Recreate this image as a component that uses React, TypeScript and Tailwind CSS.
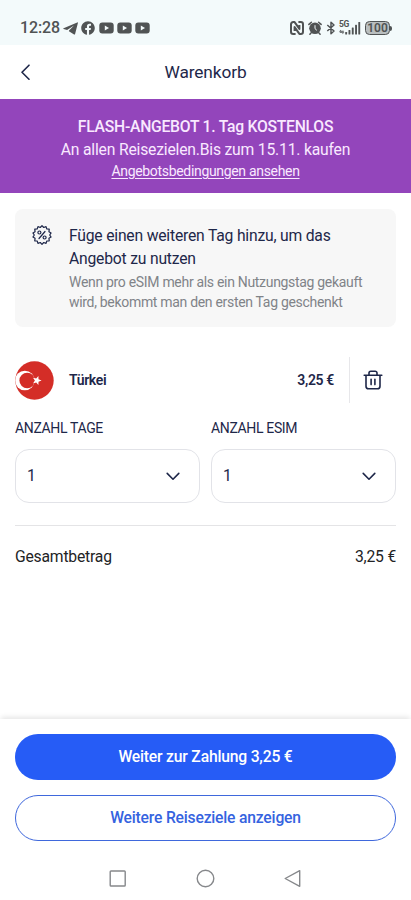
import { useState } from 'react';
import { FaFacebook } from 'react-icons/fa';

// Zigzag outline of the discount seal
const sealPoints = Array.from({ length: 28 }, (_, i) => {
  const r = i % 2 === 0 ? 9.3 : 7.7;
  const a = (i * Math.PI) / 14;
  return `${(10 + r * Math.sin(a)).toFixed(2)},${(10 - r * Math.cos(a)).toFixed(2)}`;
}).join(' ');

function TelegramIcon() {
  return (
    <svg className="w-[15px] h-[13px]" viewBox="0 0 15 13" fill="currentColor">
      <path d="M14.2 0.4 0.6 6.2c-.5.2-.5.7 0 .8l3.5 1L11 3.4 6 8.6l-.1.6 5.2 3.2c.5.3.9.1 1-.4L14.9.9c.1-.5-.2-.7-.7-.5Z" />
    </svg>
  );
}

function YoutubeIcon() {
  return (
    <svg className="w-[15px] h-[12px]" viewBox="0 0 15 12">
      <rect x="0.3" y="0.5" width="14.4" height="11" rx="3" fill="currentColor" />
      <path d="M5.8 3.6v4.8L10 6Z" fill="#f3fafb" />
    </svg>
  );
}

function StatusBar() {
  return (
    <div className="h-[45px] shrink-0 bg-[#f3fafb] text-[#505354] flex justify-between pt-[18px] pl-[20px] pr-[19px]">
      <div className="flex items-center h-5">
        <span className="w-[43px] text-[16px] leading-5 tracking-[-0.1px] font-medium">12:28</span>
        <TelegramIcon />
        <FaFacebook className="w-[14px] h-[14px] ml-[3px] mr-1" />
        <div className="flex gap-[3px]">
          <YoutubeIcon />
          <YoutubeIcon />
          <YoutubeIcon />
        </div>
      </div>
      <div className="flex items-center h-5">
        {/* NFC */}
        <svg className="w-[14px] h-[14px]" viewBox="0 0 14 14" fill="none" stroke="currentColor" strokeWidth="2" strokeLinejoin="round">
          <path d="M5.6 12.9H3.2A2.2 2.2 0 0 1 1 10.7V3.3a2.2 2.2 0 0 1 2.2-2.2h1.4l4.8 6.8V4" />
          <path d="M8.4 1.1h2.4A2.2 2.2 0 0 1 13 3.3v7.4a2.2 2.2 0 0 1-2.2 2.2H9.4L4.6 6.1V10" />
        </svg>
        {/* Alarm */}
        <svg className="w-[14px] h-[14px] ml-[4px]" viewBox="0 0 14 14" fill="none" stroke="currentColor" strokeLinecap="round">
          <circle cx="7" cy="7.3" r="5.8" fill="currentColor" stroke="none" />
          <path d="M.9 3.4 3.4 1.2M13.1 3.4l-2.5-2.2M3 12l-1.1 1.2M11 12l1.1 1.2" strokeWidth="1.5" />
          <path d="M7 4.6v3l1.6 1.5" stroke="#f3fafb" strokeWidth="1" />
        </svg>
        {/* Bluetooth */}
        <svg className="w-[10px] h-[14px] ml-[4px]" viewBox="0 0 10 14" fill="none" stroke="currentColor" strokeWidth="1.5" strokeLinejoin="round">
          <path d="M1.3 4 8 10 5 12.7V1.3L8 4 1.3 10" />
        </svg>
        {/* Signal */}
        <div className="relative ml-[3px] w-[22px] h-[14px]">
          <span className="absolute left-0 -top-px text-[8.5px] leading-[8px] font-bold tracking-[-0.5px]">5G</span>
          <svg className="w-[22px] h-[14px]" viewBox="0 0 22 14" fill="currentColor">
            <path d="M.3 10.3 2 8.7v1.1h2.8v1H.3ZM5.2 11.5l-1.7 1.7v-1.1H.8v-.8h4.4Z" />
            <rect x="6.2" y="11" width="1.9" height="2.6" rx=".5" />
            <rect x="9.5" y="9" width="1.9" height="4.6" rx=".5" />
            <rect x="12.8" y="6.5" width="1.9" height="7.1" rx=".5" />
            <rect x="16.1" y="3.8" width="1.9" height="9.8" rx=".5" />
            <rect x="19.3" y="1" width="1.9" height="12.6" rx=".5" />
          </svg>
        </div>
        <div className="ml-[4px] w-[25px] h-[14px] rounded-[4.5px] border border-[#505354] bg-[#b9bebf] flex items-center justify-center">
          <span className="text-[12px] leading-3 font-semibold">100</span>
        </div>
        <div className="w-[2px] h-[5px] rounded-r bg-[#505354]"></div>
      </div>
    </div>
  );
}

function Header() {
  return (
    <header className="h-[54px] shrink-0 flex items-center px-[20px] text-[#1e2749]">
      <button className="w-6">
        <svg className="w-[11px] h-[16px]" viewBox="0 0 11 16" fill="none" stroke="currentColor" strokeWidth="1.6" strokeLinecap="round" strokeLinejoin="round">
          <path d="M9 1.2 2 8.2l7 7" />
        </svg>
      </button>
      <h1 className="flex-1 mr-6 pt-px text-center text-[17.3px] tracking-[-0.1px]">Warenkorb</h1>
    </header>
  );
}

function FlashBanner() {
  return (
    <div className="h-[94px] shrink-0 bg-[#9345bb] text-[#f9e9ff] text-center pt-[16px]">
      <p className="text-[15.7px] leading-[23px] font-medium tracking-[-0.24px]">FLASH-ANGEBOT 1. Tag KOSTENLOS</p>
      <p className="text-[15.7px] leading-[23px] tracking-[-0.19px]">An allen Reisezielen.Bis zum 15.11. kaufen</p>
      <a className="block text-[14px] leading-[21px] tracking-[-0.32px] underline underline-offset-2">Angebotsbedingungen ansehen</a>
    </div>
  );
}

function Hint() {
  return (
    <div className="h-[118px] rounded-[8px] bg-[#f7f7f7] flex pl-[17px] pt-[15px]">
      <svg className="w-5 h-5 mt-[1px] shrink-0 text-[#1e2749]" viewBox="0 0 20 20" fill="none" stroke="currentColor" strokeWidth="1.2" strokeLinejoin="round" strokeLinecap="round">
        <polygon points={sealPoints} />
        <path d="M13 6.5 7 13.5" />
        <circle cx="7.4" cy="7.5" r="1.5" />
        <circle cx="12.6" cy="12.5" r="1.5" />
      </svg>
      <div className="ml-[17px] whitespace-nowrap">
        <p className="text-[15.7px] leading-[23px] tracking-[-0.2px] text-[#1e2749]">
          Füge einen weiteren Tag hinzu, um das<br />Angebot zu nutzen
        </p>
        <p className="mt-[3px] text-[14px] leading-[19.5px] tracking-[-0.31px] text-[#808388]">
          Wenn pro eSIM mehr als ein Nutzungstag gekauft<br />wird, bekommt man den ersten Tag geschenkt
        </p>
      </div>
    </div>
  );
}

function TurkeyFlag() {
  return (
    <svg className="w-[39px] h-[39px]" viewBox="0 0 39 39">
      <defs>
        <clipPath id="flag">
          <circle cx="19.5" cy="19.5" r="19.2" />
        </clipPath>
      </defs>
      <g clipPath="url(#flag)">
        <rect width="39" height="39" fill="#d42d27" />
        <circle cx="9.8" cy="19.5" r="9.8" fill="#fff" />
        <circle cx="12.2" cy="19.5" r="7.8" fill="#d42d27" />
        <path d="m26.6 19.5-3.1 1.2-.1 3.4-2.2-2.6-3.2.9 1.9-2.9-1.9-2.8 3.2.9 2.2-2.7.1 3.4Z" fill="#fff" />
      </g>
    </svg>
  );
}

function CartItem() {
  return (
    <div className="mt-[30px] h-[46px] flex items-center text-[#1e2749] text-[14px] font-semibold tracking-[-0.35px]">
      <TurkeyFlag />
      <span className="ml-[15px] flex-1">Türkei</span>
      <span>3,25 €</span>
      <div className="w-px h-full ml-[15px] bg-[#e7e7ea]"></div>
      <button className="ml-[13px] mr-[13px]">
        <svg className="w-[20px] h-[20px]" viewBox="0 0 20 20" fill="none" stroke="currentColor" strokeWidth="1.6" strokeLinecap="round" strokeLinejoin="round">
          <path d="M1.2 5.2h17.6M3 5.2v11a2.6 2.6 0 0 0 2.6 2.6h8.8a2.6 2.6 0 0 0 2.6-2.6v-11M6 5V3a1.8 1.8 0 0 1 1.8-1.8h4.4A1.8 1.8 0 0 1 14 3v2M8.1 9.2v5.4M11.9 9.2v5.4" />
        </svg>
      </button>
    </div>
  );
}

function Picker({ label, value, onClick }: { label: string; value: number; onClick: () => void }) {
  return (
    <div className="flex-1 text-[#1e2749]">
      <div className="text-[14px] leading-5 tracking-[-0.35px]">{label}</div>
      <button onClick={onClick} className="mt-[11px] w-full h-[54px] rounded-[14px] border border-[#e2e3e8] flex items-center justify-between pl-[11px] pr-[19px] text-[15.7px]">
        {value}
        <svg className="w-[14px] h-[9px]" viewBox="0 0 14 9" fill="none" stroke="currentColor" strokeWidth="1.6" strokeLinecap="round" strokeLinejoin="round">
          <path d="m1.2 1.4 5.8 5.8 5.8-5.8" />
        </svg>
      </button>
    </div>
  );
}

function NavBar() {
  return (
    <div className="mt-[18px] flex justify-center gap-[69px] pt-[10px] text-[#86888b]">
      <svg className="w-[19px] h-[19px]" viewBox="0 0 19 19" fill="none" stroke="currentColor" strokeWidth="1.4">
        <rect x="2.2" y="2" width="15" height="15" rx="0.8" />
      </svg>
      <svg className="w-[19px] h-[19px]" viewBox="0 0 19 19" fill="none" stroke="currentColor" strokeWidth="1.4">
        <circle cx="9.5" cy="9.5" r="8.3" />
      </svg>
      <svg className="w-[19px] h-[19px]" viewBox="0 0 19 19" fill="none" stroke="currentColor" strokeWidth="1.4" strokeLinejoin="round">
        <path d="M15.7 1.7v15.6L1.2 9.5Z" />
      </svg>
    </div>
  );
}

export default function App() {
  const [days, setDays] = useState(1);
  const [esims, setEsims] = useState(1);

  return (
    <div className="w-[411px] h-[900px] flex flex-col bg-white overflow-hidden font-['Roboto',sans-serif]">
      <StatusBar />
      <Header />
      <FlashBanner />

      <main className="flex-1 px-[15px] pt-[16px]">
        <Hint />
        <CartItem />
        <div className="mt-[15px] flex gap-[11px]">
          <Picker label="ANZAHL TAGE" value={days} onClick={() => setDays(days + 1)} />
          <Picker label="ANZAHL ESIM" value={esims} onClick={() => setEsims(esims + 1)} />
        </div>
        <div className="mt-[22px] pt-[19px] border-t border-[#e4e4e6] flex justify-between text-[15.7px] leading-[23px] tracking-[-0.2px] text-[#222325]">
          <span>Gesamtbetrag</span>
          <span>3,25 €</span>
        </div>
      </main>

      <footer className="h-[181px] shrink-0 bg-white px-[15px] pt-[15px] shadow-[0_-3px_5px_-1px_rgba(0,0,0,0.1)] text-[15.7px] tracking-[-0.2px] font-medium">
        <button className="w-full h-[46px] rounded-full bg-[#265cf6] text-white">Weiter zur Zahlung 3,25 €</button>
        <button className="mt-[15px] w-full h-[46px] rounded-full border border-[#3f68dc] text-[#3563df]">Weitere Reiseziele anzeigen</button>
        <NavBar />
      </footer>
    </div>
  );
}
